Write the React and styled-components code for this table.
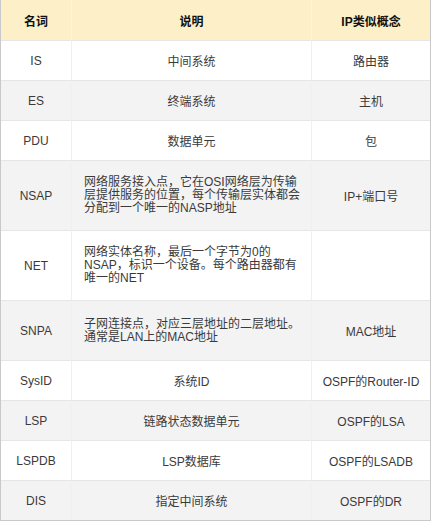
import React from "react";
import styled, { createGlobalStyle } from "styled-components";

const rows = [
  { term: "IS", desc: "中间系统", ip: "路由器", h: 40 },
  { term: "ES", desc: "终端系统", ip: "主机", h: 40 },
  { term: "PDU", desc: "数据单元", ip: "包", h: 40 },
  {
    term: "NSAP",
    desc: "网络服务接入点，它在OSI网络层为传输层提供服务的位置，每个传输层实体都会分配到一个唯一的NASP地址",
    ip: "IP+端口号",
    h: 70,
    long: true,
  },
  {
    term: "NET",
    desc: "网络实体名称，最后一个字节为0的NSAP，标识一个设备。每个路由器都有唯一的NET",
    ip: "",
    h: 70,
    long: true,
  },
  {
    term: "SNPA",
    desc: "子网连接点，对应三层地址的二层地址。通常是LAN上的MAC地址",
    ip: "MAC地址",
    h: 60,
    long: true,
  },
  { term: "SysID", desc: "系统ID", ip: "OSPF的Router-ID", h: 40 },
  { term: "LSP", desc: "链路状态数据单元", ip: "OSPF的LSA", h: 40 },
  { term: "LSPDB", desc: "LSP数据库", ip: "OSPF的LSADB", h: 40 },
  { term: "DIS", desc: "指定中间系统", ip: "OSPF的DR", h: 40 },
];

const GlobalStyle = createGlobalStyle`
  body {
    margin: 0;
    background: #ffffff;
    font-family: "Liberation Sans", "Noto Sans CJK SC", sans-serif;
  }
`;

const Table = styled.div`
  width: 431px;
  box-sizing: border-box;
  border-left: 1px solid #c9c9c9;
  border-right: 1px solid #c9c9c9;
  border-bottom: 1px solid #c9c9c9;
  display: grid;
  grid-template-columns: 70px 240px 1fr;
`;

const Row = styled.div`
  display: contents;
`;

const Cell = styled.div`
  box-sizing: border-box;
  height: ${(p) => p.$h}px;
  display: flex;
  align-items: center;
  justify-content: center;
  font-size: 12px;
  color: ${(p) => (p.$head ? "#111111" : "#3a3a3a")};
  font-weight: ${(p) => (p.$head ? 700 : 400)};
  background: ${(p) => p.$bg};
  border-top: 1px solid ${(p) => (p.$head ? "#fdf0c9" : "#e6e6e6")};
  border-left: 1px solid ${(p) => (p.$head ? "#fbf4e0" : "#f0f0f0")};
  &:first-child {
    border-left: none;
  }
  padding: ${(p) => (p.$long ? "0 8px 0 12px" : "0")};
`;

const Para = styled.p`
  margin: 0;
  width: 100%;
  text-align: left;
  line-height: 12.7px;
  word-break: normal;
`;

export default function App() {
  const head = "#fdf0c9";
  return (
    <>
      <GlobalStyle />
      <Table>
        <Row>
          <Cell $head $h={40} $bg={head}>名词</Cell>
          <Cell $head $h={40} $bg={head}>说明</Cell>
          <Cell $head $h={40} $bg={head}>IP类似概念</Cell>
        </Row>
        {rows.map((r, i) => {
          const bg = i % 2 === 1 ? "#f3f3f3" : "#ffffff";
          return (
            <Row key={r.term}>
              <Cell $h={r.h} $bg={bg}>{r.term}</Cell>
              <Cell $h={r.h} $bg={bg} $long={r.long}>
                {r.long ? <Para>{r.desc}</Para> : r.desc}
              </Cell>
              <Cell $h={r.h} $bg={bg}>{r.ip}</Cell>
            </Row>
          );
        })}
      </Table>
    </>
  );
}
